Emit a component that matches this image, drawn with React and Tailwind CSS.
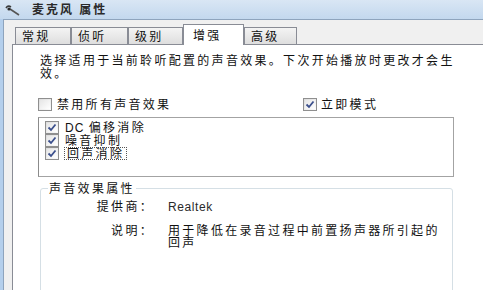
import React from 'react';

function Check({ checked = true, className = '' }) {
  return (
    <span
      className={`w-[14px] h-[13px] shrink-0 border border-[#8f8f8f] bg-linear-to-br from-[#dcdcdc] to-[#fbfbfb] p-[1px] flex items-center justify-center ${className}`}
    >
      <span className="w-full h-full bg-linear-to-br from-[#e6e6e6] to-[#ffffff] flex items-center justify-center">
        {checked && (
          <svg width="10" height="9" viewBox="0 0 10 9">
            <path d="M1.5 4.5 L4 7 L8.5 1.5" fill="none" stroke="#3b4f8c" strokeWidth="1.8" />
          </svg>
        )}
      </span>
    </span>
  );
}

const tabs = [
  { label: '常规', w: 'w-[56px]' },
  { label: '侦听', w: 'w-[57px]' },
  { label: '级别', w: 'w-[55px]' },
  { label: '增强', w: 'w-[61px]', active: true },
  { label: '高级', w: 'w-[53px]' },
];

export default function App() {
  return (
    <div className="w-[483px] h-[290px] overflow-hidden flex flex-col bg-[#b4cfec] font-['Liberation_Sans','Noto_Sans_CJK_SC',sans-serif] text-[12px] leading-[13px] text-[#111] tracking-[2.3px]">
      {/* title bar */}
      <div className="h-[19px] shrink-0 flex items-center bg-linear-to-b from-[#d9e6f4] to-[#c3d8ee]">
        <svg width="18" height="14" viewBox="0 0 18 14" className="ml-[4px]">
          <path d="M2 5 Q4 2 7 4" fill="none" stroke="#3a3a3a" strokeWidth="1.6" />
          <path d="M6 6 L15 12" stroke="#555" strokeWidth="1.6" />
          <circle cx="5" cy="6" r="1.6" fill="#2b2b2b" />
        </svg>
        <span className="ml-[10px] pt-[2px] font-bold text-[12px] text-[#2a2a2a] tracking-[2px]">麦克风 属性</span>
      </div>

      {/* window body */}
      <div className="flex-1 flex pl-[3px]">
        <div className="flex-1 flex flex-col border-l border-t border-[#8ea4bd] bg-[#f0f0f0] pl-[8px] pt-[4px]">
          {/* tabs */}
          <div className="h-[20px] flex items-end pl-[3px]">
            {tabs.map((t) =>
              t.active ? (
                <div
                  key={t.label}
                  className={`${t.w} h-[21px] -mb-px relative z-10 bg-white border border-b-0 border-[#898c95] pl-[9px] pt-[5px]`}
                >
                  {t.label}
                </div>
              ) : (
                <div
                  key={t.label}
                  className={`${t.w} h-[17px] bg-linear-to-b from-[#f4f4f4] to-[#dedede] border border-b-0 border-[#898c95] pl-[6px] pt-[3px]`}
                >
                  {t.label}
                </div>
              )
            )}
          </div>

          {/* tab panel */}
          <div className="flex-1 border-l border-t border-[#898c95] bg-white pl-[25px] pt-[10px]">
            <p className="ml-[2px] w-[420px]">
              选择适用于当前聆听配置的声音效果。下次开始播放时更改才会生效。
            </p>

            <div className="mt-[17px] flex items-center h-[13px]">
              <div className="w-[265px] flex items-center">
                <Check checked={false} />
                <span className="ml-[5px] pt-[1px]">禁用所有声音效果</span>
              </div>
              <div className="flex items-center">
                <Check />
                <span className="ml-[4px] pt-[1px]">立即模式</span>
              </div>
            </div>

            {/* effects list */}
            <div className="mt-[6px] w-[416px] h-[60px] border border-[#a3a3a3] border-l-[#8b8b8b] pl-[6px] pt-[3px]">
              <div className="flex items-center h-[13px]">
                <Check />
                <span className="ml-[6px] pt-[1px] tracking-[1.2px]">DC</span>
                <span className="ml-[4px] pt-[1px]">偏移消除</span>
              </div>
              <div className="flex items-center h-[13px]">
                <Check />
                <span className="ml-[6px] pt-[1px]">噪音抑制</span>
              </div>
              <div className="flex items-center h-[13px]">
                <Check />
                <span className="ml-[5px] border border-dotted border-[#555] px-[2px] h-[13px] leading-[12px]">回声消除</span>
              </div>
            </div>

            {/* group box */}
            <div className="mt-[11px] ml-[2px] w-[413px] h-[200px] relative border border-[#d5dfe5] rounded-[3px] pt-[12px]">
              <span className="absolute -top-[6px] left-[7px] bg-white px-[1px]">声音效果属性</span>
              <div className="flex">
                <span className="w-[113px] text-right">提供商：</span>
                <span className="ml-[14px] tracking-[0.6px] text-[#2a2a2a]">Realtek</span>
              </div>
              <div className="flex mt-[11px]">
                <span className="w-[113px] text-right">说明：</span>
                <span className="ml-[14px] w-[280px] leading-[12px]">
                  用于降低在录音过程中前置扬声器所引起的回声
                </span>
              </div>
            </div>
          </div>
        </div>
      </div>
    </div>
  );
}
